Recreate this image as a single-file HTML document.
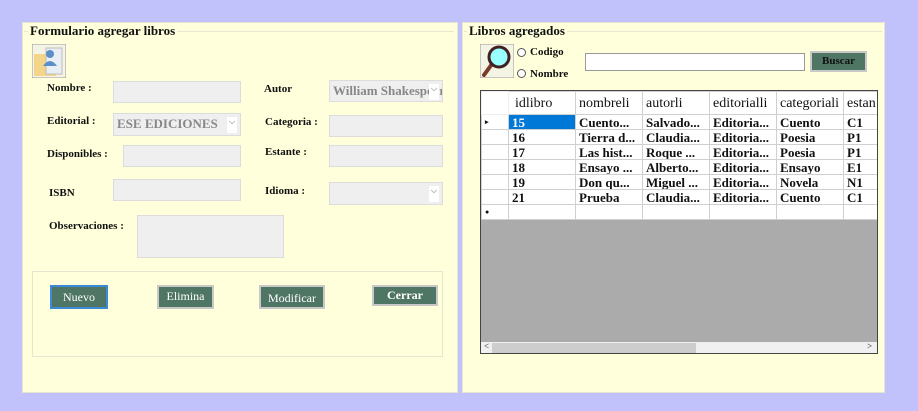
<!DOCTYPE html>
<html><head><style>
*{margin:0;padding:0;box-sizing:border-box}
body{width:918px;height:411px;background:#c1c1fb;position:relative;overflow:hidden;font-family:"Liberation Serif",serif;font-weight:bold;color:#111}
.a{position:absolute}
.panel{background:#ffffdc;border:1px solid #e6e6d0}
.title{font-size:13px;background:#ffffdc;padding:0 2px}
.lbl{font-size:11px}
.in{background:#efefef;border:1px solid #dcdcdc}
.cb{background:#efefef;border:1px solid #dcdcdc;color:#888;font-size:13px;padding:2px 3px;overflow:hidden;white-space:nowrap}
.cb:after{content:"⌵";position:absolute;right:3px;top:3px;font-size:8px;color:#aaa;background:#fff;width:10px;height:16px;text-align:center}
.btn{background:#4f7565;color:#fff;border:2px solid #c8c8c8;font-size:12px;font-weight:normal;text-align:center;line-height:18px}
.grid{background:#ababab;border:1px solid #444}
table{border-collapse:collapse;table-layout:fixed;width:400px;font-size:13px;position:absolute;left:0;top:0;background:#fff}
td{border:1px solid #d0d0d0;height:15px;line-height:13px;padding:0 3px;white-space:nowrap;overflow:hidden}
</style></head><body>
<div class="a panel" style="left:22px;top:22px;width:436px;height:371px"></div>
<div class="a" style="left:24px;top:31px;width:430px;border-top:1px solid #e8e8d0"></div>
<div class="a title" style="left:28px;top:23px">Formulario agregar libros</div>
<svg class="a" style="left:32px;top:44px" width="34" height="34"><rect x="0" y="0" width="34" height="34" fill="#f4f4e4" stroke="#999" stroke-width="1"/><rect x="2" y="10" width="22" height="22" fill="#f5d58a"/><rect x="14" y="4" width="16" height="26" fill="#e8eef4" stroke="#bbb"/><circle cx="18" cy="10" r="4" fill="#5b8fc7"/><path d="M11 22 q7-10 14 0z" fill="#5b8fc7"/></svg>
<div class="a lbl" style="left:47px;top:82px">Nombre :</div>
<div class="a in" style="left:113px;top:81px;width:128px;height:22px"></div>
<div class="a lbl" style="left:264px;top:83px">Autor</div>
<div class="a cb" style="left:329px;top:80px;width:114px;height:22px">William Shakespeare</div>
<div class="a lbl" style="left:47px;top:115px">Editorial :</div>
<div class="a cb" style="left:113px;top:113px;width:128px;height:23px">ESE EDICIONES</div>
<div class="a lbl" style="left:265px;top:116px">Categoria :</div>
<div class="a in" style="left:329px;top:115px;width:114px;height:22px"></div>
<div class="a lbl" style="left:47px;top:148px">Disponibles :</div>
<div class="a in" style="left:123px;top:145px;width:118px;height:22px"></div>
<div class="a lbl" style="left:265px;top:146px">Estante :</div>
<div class="a in" style="left:329px;top:145px;width:114px;height:22px"></div>
<div class="a lbl" style="left:49px;top:187px">ISBN</div>
<div class="a in" style="left:113px;top:179px;width:128px;height:22px"></div>
<div class="a lbl" style="left:265px;top:185px">Idioma :</div>
<div class="a cb" style="left:329px;top:182px;width:114px;height:23px"></div>
<div class="a lbl" style="left:49px;top:220px">Observaciones :</div>
<div class="a in" style="left:137px;top:215px;width:147px;height:43px"></div>
<div class="a" style="left:32px;top:271px;width:411px;height:86px;border:1px solid #e6e6cc"></div>
<div class="a btn" style="left:50px;top:285px;width:58px;height:24px;border-color:#3a8ad8;line-height:20px">Nuevo</div>
<div class="a btn" style="left:157px;top:285px;width:57px;height:24px">Elimina</div>
<div class="a btn" style="left:259px;top:285px;width:66px;height:24px;line-height:22px">Modificar</div>
<div class="a btn" style="left:372px;top:285px;width:66px;height:21px;line-height:16px;font-weight:bold">Cerrar</div>

<div class="a panel" style="left:462px;top:22px;width:423px;height:371px"></div>
<div class="a" style="left:464px;top:31px;width:418px;border-top:1px solid #e8e8d0"></div>
<div class="a title" style="left:467px;top:23px">Libros agregados</div>
<svg class="a" style="left:480px;top:44px" width="34" height="34"><rect x="0" y="0" width="34" height="34" fill="#f4f4e4" stroke="#999"/><path d="M12 20 L4 31" stroke="#7a3a2a" stroke-width="4" stroke-linecap="round"/><circle cx="19" cy="13" r="10" fill="#9ff" stroke="#402020" stroke-width="3"/></svg>
<div class="a" style="left:517px;top:48px;width:9px;height:9px;border:1px solid #555;border-radius:50%;background:#fff"></div>
<div class="a lbl" style="left:530px;top:46px">Codigo</div>
<div class="a" style="left:517px;top:69px;width:9px;height:9px;border:1px solid #555;border-radius:50%;background:#fff"></div>
<div class="a lbl" style="left:530px;top:68px">Nombre</div>
<div class="a" style="left:585px;top:53px;width:220px;height:18px;background:#fff;border:1px solid #999"></div>
<div class="a btn" style="left:810px;top:51px;width:57px;height:21px;line-height:16px;color:#111;font-weight:bold;font-size:11px">Buscar</div>
<div class="a grid" style="left:480px;top:90px;width:398px;height:264px;overflow:hidden">
<table>
<colgroup><col style="width:27px"><col style="width:67px"><col style="width:67px"><col style="width:67px"><col style="width:67px"><col style="width:67px"><col style="width:38px"></colgroup>
<tr style="height:23px;font-size:14px;font-weight:normal"><td style="border-color:#eee"></td><td style="padding-left:6px">idlibro</td><td>nombreli</td><td>autorli</td><td>editorialli</td><td>categoriali</td><td>estan</td></tr>
<tr><td style="font-size:7px">▸</td><td style="background:#0078d7;color:#fff">15</td><td>Cuento...</td><td>Salvado...</td><td>Editoria...</td><td>Cuento</td><td>C1</td></tr>
<tr><td></td><td>16</td><td>Tierra d...</td><td>Claudia...</td><td>Editoria...</td><td>Poesia</td><td>P1</td></tr>
<tr><td></td><td>17</td><td>Las hist...</td><td>Roque ...</td><td>Editoria...</td><td>Poesia</td><td>P1</td></tr>
<tr><td></td><td>18</td><td>Ensayo ...</td><td>Alberto...</td><td>Editoria...</td><td>Ensayo</td><td>E1</td></tr>
<tr><td></td><td>19</td><td>Don qu...</td><td>Miguel ...</td><td>Editoria...</td><td>Novela</td><td>N1</td></tr>
<tr><td></td><td>21</td><td>Prueba</td><td>Claudia...</td><td>Editoria...</td><td>Cuento</td><td>C1</td></tr>
<tr><td style="font-size:7px">●</td><td></td><td></td><td></td><td></td><td></td><td></td></tr>
</table>
<div class="a" style="left:0;top:251px;width:396px;height:12px;background:#f0f0f0"></div>
<div class="a" style="left:11px;top:252px;width:204px;height:10px;background:#cdcdcd"></div>
<div class="a" style="left:3px;top:250px;font-size:9px;color:#555">&lt;</div>
<div class="a" style="left:386px;top:250px;font-size:9px;color:#555">&gt;</div>
</div>
</body></html>
